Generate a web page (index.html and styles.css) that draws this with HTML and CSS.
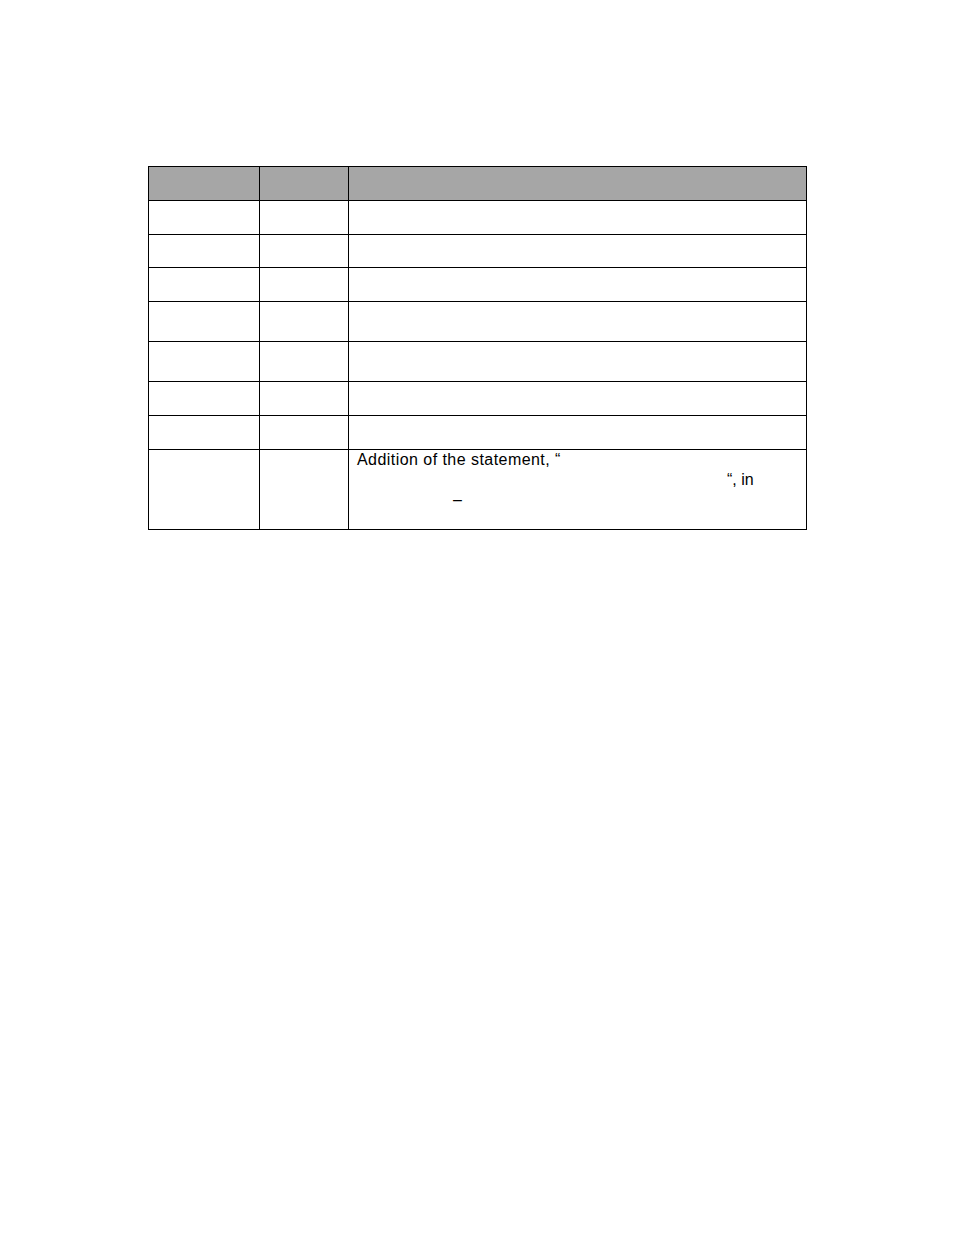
FILE: index.html
```html
<!DOCTYPE html>
<html>
<head>
<meta charset="utf-8">
<link rel="stylesheet" href="styles.css">
</head>
<body>
<div class="page">
<table class="rev">
  <colgroup><col class="c1"><col class="c2"><col class="c3"></colgroup>
  <tr class="head"><th></th><th></th><th></th></tr>
  <tr class="r34"><td></td><td></td><td></td></tr>
  <tr class="r33"><td></td><td></td><td></td></tr>
  <tr class="r34"><td></td><td></td><td></td></tr>
  <tr class="r40"><td></td><td></td><td></td></tr>
  <tr class="r40"><td></td><td></td><td></td></tr>
  <tr class="r34"><td></td><td></td><td></td></tr>
  <tr class="r34"><td></td><td></td><td></td></tr>
  <tr class="r80"><td></td><td></td><td class="desc">
    <div class="ln">Addition of the statement, “</div>
    <div class="ln l2">“, in</div>
    <div class="ln l3">–</div>
  </td></tr>
</table>
</div>
</body>
</html>
```
FILE: styles.css
```css
html, body { margin: 0; padding: 0; background: #fff; }
.page { padding: 166px 0 0 148px; }
.rev {
  border-collapse: collapse;
  width: 658px;
  table-layout: fixed;
  font-family: "Liberation Sans", Arial, sans-serif;
  font-size: 16px;
  color: #000;
}
.c1 { width: 111px; }
.c2 { width: 89px; }
.c3 { width: 458px; }
.rev th, .rev td {
  border: 1px solid #000;
  padding: 0;
  vertical-align: top;
}
.head th { background: #a6a6a6; height: 33px; }
.r34 td { height: 33px; }
.r33 td { height: 32px; }
.r40 td { height: 39px; }
.r80 td { height: 79px; }
.desc { padding: 0 0 0 8px !important; }
.ln { height: 20px; line-height: 20px; white-space: nowrap; }
.ln:first-child { letter-spacing: 0.45px; }
.l2 { padding-left: 370px; }
.l3 { padding-left: 96px; }
```
